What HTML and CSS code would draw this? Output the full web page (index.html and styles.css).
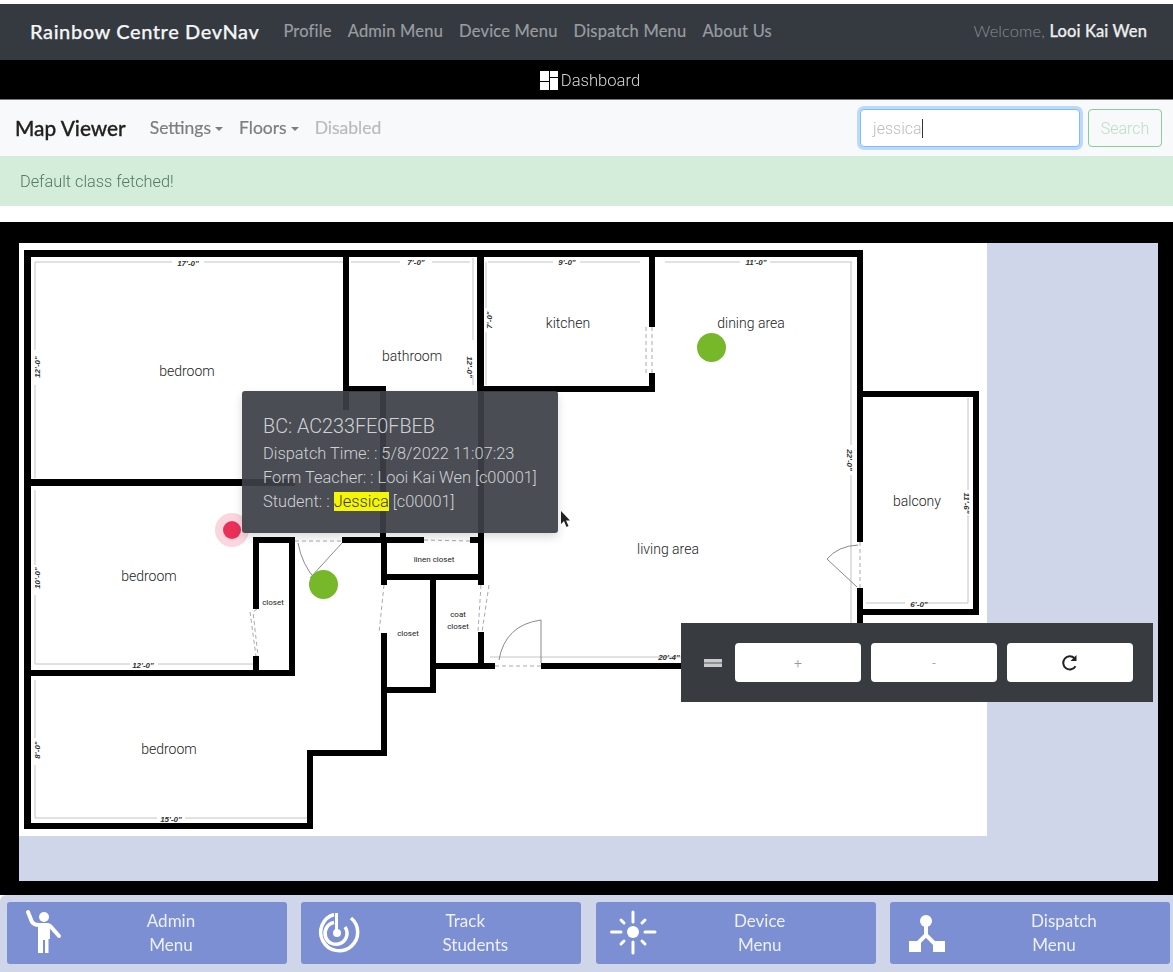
FILE: index.html
```html
<!DOCTYPE html>
<html lang="en">
<head>
<meta charset="utf-8">
<title>Rainbow Centre DevNav</title>
<link rel="stylesheet" href="styles.css">
</head>
<body>
<div class="page">
  <nav class="topnav">
    <a class="brand">Rainbow Centre DevNav</a>
    <ul class="navlinks">
      <li>Profile</li><li>Admin Menu</li><li>Device Menu</li><li>Dispatch Menu</li><li>About Us</li>
    </ul>
    <div class="welcome">Welcome, <b>Looi Kai Wen</b></div>
  </nav>
  <div class="dashbar">
    <svg class="dash-icon" viewBox="0 0 18 19"><path d="M0 0h9v10H0zM10 0h8v6h-8zM10 7h8v12h-8zM0 11h9v8H0z" fill="#fff"/></svg>
    <span>Dashboard</span>
  </div>
  <div class="subnav">
    <span class="subbrand">Map Viewer</span>
    <span class="sublink caret">Settings</span>
    <span class="sublink caret">Floors</span>
    <span class="sublink disabled">Disabled</span>
    <form class="searchform">
      <div class="searchinput"><span>jessica</span><i class="textcursor"></i></div>
      <div class="searchbtn">Search</div>
    </form>
  </div>
  <div class="alert">Default class fetched!</div>
  <div class="spacer"></div>
  <main class="mapwrap">
    <div class="canvas">
      <svg class="plan" viewBox="19 243 968 593" width="968" height="593">
        <rect x="19" y="243" width="968" height="593" fill="#fff"/>
        <g class="dim">
          <path d="M35 262H172M204 262H344M351 262H400M432 262H470M488 262H553M580 262H640M665 262H740M770 262H852"/>
          <path d="M35 262V350M35 385V478M35 490V565M35 595V664M35 680V738M35 765V818"/>
          <path d="M473 258V340M473 375V385M486 262V308M486 332V385M851 262V445M851 475V625"/>
          <path d="M968 398V490M968 515V603M866 603H905M925 603H968"/>
          <path d="M35 664H130M158 664H253M35 818H157M185 818H307M490 657H684"/>
        </g>
        <g fill="#000">
          <rect x="24" y="250" width="839" height="7"/>
          <rect x="24" y="250" width="7" height="579"/>
          <rect x="24" y="823" width="289" height="6"/>
          <rect x="307" y="750" width="6" height="79"/>
          <rect x="307" y="750" width="80" height="6"/>
          <rect x="381" y="537" width="6" height="48"/>
          <rect x="381" y="633" width="6" height="123"/>
          <rect x="381" y="687" width="55" height="6"/>
          <rect x="430" y="574" width="6" height="119"/>
          <rect x="381" y="574" width="103" height="6"/>
          <rect x="478" y="388" width="6" height="197"/>
          <rect x="478" y="632" width="6" height="37"/>
          <rect x="430" y="663" width="65" height="6"/>
          <rect x="541" y="663" width="145" height="6"/>
          <rect x="343" y="250" width="6" height="160"/>
          <rect x="343" y="386" width="43" height="6"/>
          <rect x="380" y="386" width="6" height="155"/>
          <rect x="477" y="250" width="7" height="138"/>
          <rect x="477" y="386" width="178" height="6"/>
          <rect x="649" y="250" width="6" height="77"/>
          <rect x="649" y="373" width="6" height="19"/>
          <rect x="857" y="250" width="6" height="292"/>
          <rect x="857" y="588" width="6" height="40"/>
          <rect x="857" y="391" width="122" height="6"/>
          <rect x="973" y="391" width="6" height="224"/>
          <rect x="857" y="609" width="122" height="6"/>
          <rect x="24" y="479" width="271" height="7"/>
          <rect x="253" y="537" width="42" height="6"/>
          <rect x="253" y="537" width="6" height="72"/>
          <rect x="253" y="656" width="6" height="20"/>
          <rect x="289" y="537" width="6" height="139"/>
          <rect x="24" y="670" width="271" height="6"/>
          <rect x="342" y="537" width="82" height="6"/>
          <rect x="470" y="537" width="14" height="6"/>
        </g>
        <g class="door">
          <path d="M342 543L310 578M298 543Q302 565 316 580"/>
          <path d="M499 660Q505 625 541 620V663"/>
          <path d="M858 545Q838 546 827 559L857 587"/>
        </g>
        <g class="door dashed">
          <path d="M295 541H342"/>
          <path d="M424 540L470 541"/>
          <path d="M652 327V373M646 327V373"/>
          <path d="M257 609L253 612L258 656M250 612L256 656"/>
          <path d="M384 585L379 633"/>
          <path d="M481 585L478 632M489 585L482 632"/>
          <path d="M495 666H541"/>
          <path d="M860 542V588"/>
        </g>
        <g class="label">
          <text x="187" y="376">bedroom</text>
          <text x="412" y="361">bathroom</text>
          <text x="568" y="328">kitchen</text>
          <text x="751" y="328">dining area</text>
          <text x="917" y="506">balcony</text>
          <text x="668" y="554">living area</text>
          <text x="149" y="581">bedroom</text>
          <text x="169" y="754">bedroom</text>
        </g>
        <g class="label small">
          <text x="273" y="605">closet</text>
          <text x="408" y="636">closet</text>
          <text x="434" y="562">linen closet</text>
          <text x="458" y="617">coat</text>
          <text x="458" y="629">closet</text>
        </g>
        <g class="label dimtext">
          <text x="188" y="266">17'-0"</text>
          <text x="416" y="265">7'-0"</text>
          <text x="567" y="265">9'-0"</text>
          <text x="756" y="265">11'-0"</text>
          <text x="143" y="668">12'-0"</text>
          <text x="171" y="822">15'-0"</text>
          <text x="669" y="660">20'-4"</text>
          <text x="919" y="607">6'-0"</text>
          <text transform="translate(40 367) rotate(-90)">12'-0"</text>
          <text transform="translate(40 578) rotate(-90)">10'-0"</text>
          <text transform="translate(40 750) rotate(-90)">8'-0"</text>
          <text transform="translate(467 367) rotate(90)">12'-0"</text>
          <text transform="translate(492 320) rotate(-90)">7'-0"</text>
          <text transform="translate(847 460) rotate(90)">22'-0"</text>
          <text transform="translate(964 503) rotate(90)">11'-6"</text>
        </g>
      </svg>

      <span class="dot green dot-dining"></span>
      <span class="dot green dot-hall"></span>
      <span class="dot red"></span>

      <div class="tip">
        <h4>BC: AC233FE0FBEB</h4>
        <p>Dispatch Time: : 5/8/2022 11:07:23</p>
        <p>Form Teacher: : Looi Kai Wen [c00001]</p>
        <p>Student: : <mark>Jessica</mark> [c00001]</p>
      </div>

      <svg class="pointer" viewBox="0 0 12 18"><path d="M1 1V14L4 11L6.500 17L8.500 16L6 10.500H10Z" fill="#222"/></svg>

      <div class="controls">
        <span class="handle"></span>
        <button class="ctl" type="button">+</button>
        <button class="ctl" type="button">-</button>
        <button class="ctl" type="button">
          <svg class="refresh" viewBox="0 0 18 18"><path d="M14.500 12.200A6.600 6.600 0 1 1 13.500 4.200" fill="none" stroke="#222" stroke-width="2"/><path d="M15.500 1V7H9.500Z" fill="#222"/></svg>
        </button>
      </div>
    </div>
  </main>
  <footer class="dock">
    <a class="dockbtn">
      <svg class="dockicon" viewBox="0 0 48 48">
        <circle cx="23" cy="8" r="5" fill="#fff"/>
        <path d="M7 3L11 13Q13 16 18 16H26Q29 16 31 19L38 27" fill="none" stroke="#fff" stroke-width="4" stroke-linecap="round"/>
        <path d="M17 15H29V30H27.500V44H24V31H22V44H17Z" fill="#fff"/>
      </svg>
      <span class="docklabel"><span>Admin</span><span>Menu</span></span>
    </a>
    <a class="dockbtn">
      <svg class="dockicon" viewBox="0 0 48 48">
        <g fill="none" stroke="#fff" stroke-width="3.500">
          <path d="M19 5.500A18.500 18.500 0 1 0 36 9"/>
          <path d="M19 13.500A11 11 0 1 0 30 18"/>
        </g>
        <path d="M20 4H23V22H20Z" fill="#fff"/>
        <circle cx="22" cy="24" r="4" fill="#fff"/>
      </svg>
      <span class="docklabel"><span>Track</span><span class="long">Students</span></span>
    </a>
    <a class="dockbtn">
      <svg class="dockicon" viewBox="0 0 48 48">
        <circle cx="23" cy="23" r="6" fill="#fff"/>
        <g stroke="#fff" stroke-width="3" stroke-linecap="round">
          <path d="M23 3V13M23 33V44M1.500 23H11M35 23H45M11 11L14 14M35 11L32 14M11 35L14 32M35 35L32 32"/>
        </g>
      </svg>
      <span class="docklabel"><span>Device</span><span>Menu</span></span>
    </a>
    <a class="dockbtn">
      <svg class="dockicon" viewBox="0 0 48 48">
        <circle cx="22" cy="12" r="6" fill="#fff"/>
        <path d="M22 14V26L10 38M22 26L34 38" fill="none" stroke="#fff" stroke-width="4"/>
        <path d="M5 32H17V43H5ZM29 32H41V43H29Z" fill="#fff"/>
      </svg>
      <span class="docklabel"><span class="long">Dispatch</span><span>Menu</span></span>
    </a>
  </footer>
</div>
</body>
</html>
```
FILE: styles.css
```css
* { box-sizing: border-box; }
html, body { margin: 0; padding: 0; height: 972px; overflow: hidden; background: #fff; }
body { font-family: "Lato", "Liberation Sans", sans-serif; font-size: 16px; color: #212529; }
.page { display: flex; flex-direction: column; width: 1173px; height: 972px; padding-top: 4px; filter: blur(.4px); }

.topnav { display: flex; align-items: center; height: 56px; padding: 0 26px 2px 30px; background: #343a40; }
.brand { font-size: 20px; font-weight: 500; color: #f4f5f6; margin-right: 24px; letter-spacing: .6px; -webkit-text-stroke: .25px #f4f5f6; }
.navlinks { display: flex; gap: 16px; margin: 0; padding: 0; list-style: none; color: #9a9da0; font-size: 16.500px; letter-spacing: .2px; -webkit-text-stroke: .2px #9a9da0; }
.welcome { margin-left: auto; font-size: 16.500px; font-weight: 300; color: #8a8e92; letter-spacing: .1px; }
.welcome b { font-weight: 500; color: #eceded; -webkit-text-stroke: .25px #eceded; }

.dashbar { display: flex; align-items: center; justify-content: center; gap: 3px; height: 40px; padding: 1px 0 0 7px; background: #000; color: #d6d6d6; font-family: "Roboto", sans-serif; font-weight: 300; font-size: 16.600px; border-bottom: 1px solid #777; }
.dash-icon { width: 18px; height: 19px; }

.subnav { display: flex; align-items: center; height: 56px; padding: 0 11px 2px 15px; background: #f8f9fa; }
.subbrand { font-size: 20.800px; font-weight: 500; color: #22211f; margin-right: 24px; -webkit-text-stroke: .3px #22211f; }
.sublink { margin-right: 16px; color: #7c7e80; font-size: 17.500px; -webkit-text-stroke: .2px currentColor; }
.sublink.disabled { color: #b9bbbd; }
.caret::after { content: ""; display: inline-block; margin-left: 4px; vertical-align: 3px; border-top: 4px solid #7c7e80; border-left: 4px solid transparent; border-right: 4px solid transparent; }
.searchform { display: flex; gap: 8px; margin-left: auto; margin-bottom: -2px; }
.searchinput { display: flex; align-items: center; width: 220px; height: 38px; padding: 0 12px; background: #fff; border: 1px solid #80bdff; border-radius: 4px; box-shadow: 0 0 0 3px rgba(0, 123, 255, .25); color: #bcbcbc; font-family: "Roboto", sans-serif; font-weight: 300; font-size: 16px; }
.textcursor { width: 1px; height: 19px; background: #333; }
.searchbtn { display: flex; align-items: center; justify-content: center; width: 74px; height: 38px; border: 1px solid #8ccb9d; border-radius: 4px; color: #b9dfc4; font-family: "Roboto", sans-serif; font-weight: 300; font-size: 16px; }

.alert { display: flex; align-items: center; height: 50px; padding: 0 20px; background: #d4edda; color: #53795e; font-family: "Roboto", sans-serif; font-weight: 300; font-size: 16.300px; }
.spacer { height: 16px; background: #fff; }

.mapwrap { height: 673px; padding: 21px 15px 14px 19px; background: #000; }
.canvas { position: relative; width: 1139px; height: 638px; background: #d0d6ea; overflow: hidden; }
.plan { display: block; }
.dim { fill: none; stroke: #c4c4c4; stroke-width: 1; }
.door { fill: none; stroke: #8a8a8a; stroke-width: 1; }
.door.dashed { stroke: #aaa; stroke-dasharray: 4 3; }
.label text { font-family: "Roboto", sans-serif; font-size: 14px; font-weight: 300; fill: #222; text-anchor: middle; }
.label.small text { font-size: 8px; font-weight: 400; }
.label.dimtext text { font-family: "Liberation Sans", sans-serif; font-size: 8px; font-style: italic; font-weight: 700; fill: #333; }

.dot { position: absolute; border-radius: 50%; }
.green { width: 29px; height: 29px; background: #77b82a; }
.dot-dining { left: 678px; top: 90px; }
.dot-hall { left: 290px; top: 327px; }
.red { left: 204px; top: 278px; width: 18px; height: 18px; background: #ea3058; box-shadow: 0 0 0 8px rgba(234, 48, 88, .2); }

.tip { position: absolute; left: 223px; top: 148px; width: 316px; height: 142px; padding: 24px 21px 0; background: rgba(60, 64, 70, .93); border-radius: 3px; box-shadow: 0 4px 10px rgba(0, 0, 0, .15); color: #cfd1d3; font-family: "Roboto", sans-serif; font-weight: 300; font-size: 16.400px; }
.tip h4 { margin: 0 0 3px; font-size: 19.800px; font-weight: 300; line-height: 24px; }
.tip p { margin: 0; line-height: 24px; }
.tip mark { background: #f6f600; color: #3a3a2a; }
.pointer { position: absolute; left: 541px; top: 267px; width: 12px; height: 18px; }

.controls { position: absolute; left: 662px; top: 380px; display: flex; align-items: center; gap: 10px; width: 472px; height: 79px; padding: 0 20px 0 23px; background: #383c41; }
.handle { width: 18px; height: 8px; margin-right: 3px; border-top: 3px solid #c9cacb; border-bottom: 3px solid #c9cacb; background: #8d8f91; }
.ctl { display: flex; align-items: center; justify-content: center; width: 126px; height: 39px; padding: 0; border: 0; border-radius: 4px; background: #fff; color: #999; font-family: "Roboto", sans-serif; font-weight: 300; font-size: 14px; }
.refresh { width: 18px; height: 18px; }

.dock { display: flex; justify-content: space-between; height: 77px; padding: 7px 3px 8px 7px; background: #d0d6ea; border-radius: 6px 0 0 0; }
.dockbtn { display: flex; align-items: center; width: 280px; height: 62px; padding: 0 14px; background: #7b8fd2; border-radius: 3px; color: #eef0f8; font-size: 17px; }
.dockicon { flex: none; width: 48px; height: 48px; }
.docklabel { flex: 1; display: flex; flex-direction: column; align-items: center; line-height: 24px; }
.docklabel .long { padding-left: 20px; }
```
